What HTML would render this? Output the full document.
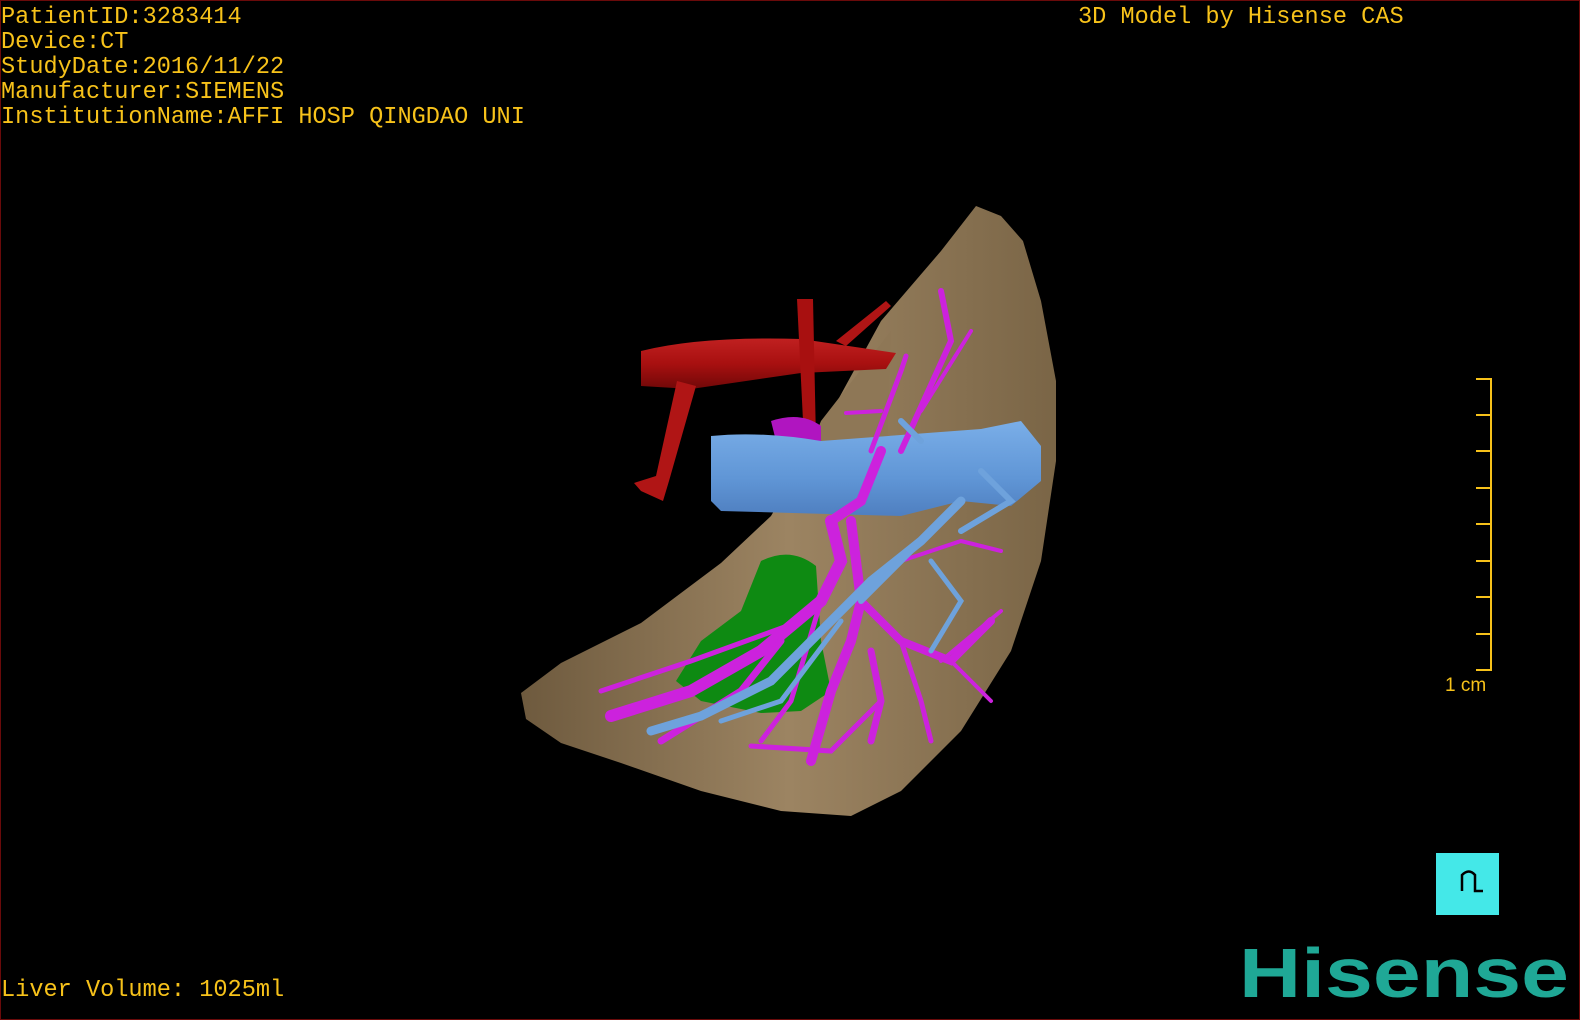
<!DOCTYPE html>
<html><head><meta charset="utf-8"><style>
html,body{margin:0;padding:0;background:#000;}
#f{position:relative;width:1578px;height:1018px;border:1px solid #6a0a0a;overflow:hidden;background:#000;}
.t{position:absolute;color:#f7c21a;font-family:"Liberation Mono",monospace;font-size:23.6px;line-height:25px;white-space:pre;}
</style></head><body><div id="f">
<div class="t" style="left:0;top:4px">PatientID:3283414
Device:CT
StudyDate:2016/11/22
Manufacturer:SIEMENS
InstitutionName:AFFI HOSP QINGDAO UNI</div>
<div class="t" style="left:1077px;top:4px">3D Model by Hisense CAS</div>
<div class="t" style="left:0;top:977px">Liver Volume: 1025ml</div>
<svg width="1578" height="1018" style="position:absolute;left:0;top:0">
<defs>
<linearGradient id="lv" x1="0" y1="0" x2="1" y2="0">
<stop offset="0" stop-color="#6e5a3e"/><stop offset="0.5" stop-color="#9c8462"/><stop offset="1" stop-color="#7a6546"/></linearGradient>
<linearGradient id="rd" x1="0" y1="0" x2="0" y2="1"><stop offset="0" stop-color="#c02020"/><stop offset="0.5" stop-color="#a81010"/><stop offset="1" stop-color="#700808"/></linearGradient>
<linearGradient id="bl" x1="0" y1="0" x2="0" y2="1"><stop offset="0" stop-color="#7aaee8"/><stop offset="0.6" stop-color="#6096d6"/><stop offset="1" stop-color="#4f7fc0"/></linearGradient>
</defs>
<path d="M520,692 L560,662 L640,622 L720,562 L770,515 L820,430 L880,320 L940,250 L975,205 L1000,215 L1022,240 L1040,300 L1055,380 L1055,460 L1040,560 L1010,650 L960,730 L900,790 L850,815 L780,810 L700,790 L620,762 L560,742 L525,718 Z" fill="url(#lv)"/>
<path d="M820,420 L890,330 L885,480 L800,470 Z" fill="#8e7756"/>
<path d="M640,350 Q700,335 800,338 L895,352 L885,368 L800,372 L690,388 L640,385 Z" fill="url(#rd)"/>
<path d="M676,380 L695,385 L668,480 L662,500 L640,490 L633,482 L655,475 Z" fill="#b01515"/>
<path d="M796,298 L812,298 L815,440 L803,440 Z" fill="#a81010"/>
<path d="M835,340 L885,300 L890,305 L845,345 Z" fill="#b01515"/>
<path d="M770,420 Q800,410 820,425 L820,445 L775,440 Z" fill="#b015c0"/>
<path d="M710,435 Q760,430 820,440 L980,428 L1020,420 L1040,445 L1040,480 L1010,505 L960,500 L900,515 L720,510 L710,500 Z" fill="url(#bl)"/>
<path d="M760,560 Q790,545 815,565 L820,640 L830,690 L800,710 L760,712 L700,700 L675,680 L700,640 L740,610 Z" fill="#0e8a12"/>
<g fill="none" stroke="#cc22dd" stroke-linecap="round">
<path d="M830,520 L840,560 L820,600 L760,650 L690,690 L610,715" stroke-width="12"/>
<path d="M850,520 L860,600 L850,640 L830,690 L810,760" stroke-width="10"/>
<path d="M860,600 L900,640 L950,660 L990,620" stroke-width="8"/>
<path d="M870,650 L880,700 L870,740" stroke-width="7"/>
<path d="M780,640 L740,690 L660,740" stroke-width="7"/>
<path d="M800,620 L690,660 L600,690" stroke-width="5"/>
<path d="M820,600 L790,700 L760,740" stroke-width="5"/>
<path d="M900,640 L920,700 L930,740" stroke-width="5"/>
<path d="M940,660 L1000,610" stroke-width="4"/>
<path d="M950,660 L990,700" stroke-width="4"/>
<path d="M880,700 L830,750 L750,745" stroke-width="5"/>
<path d="M870,450 L900,370 L905,355" stroke-width="5"/>
<path d="M900,450 L950,340 L940,290" stroke-width="6"/>
<path d="M920,410 L970,330" stroke-width="4"/>
<path d="M880,410 L845,412" stroke-width="4"/>
<path d="M830,520 L860,500 L880,450" stroke-width="10"/>
<path d="M900,560 L960,540 L1000,550" stroke-width="4"/>
</g>
<g fill="none" stroke="#6ea2dc" stroke-linecap="round">
<path d="M960,500 L920,540 L870,580 L820,630 L770,680 L700,715 L650,730" stroke-width="9"/>
<path d="M950,510 L900,560 L860,600" stroke-width="6"/>
<path d="M930,560 L960,600 L930,650" stroke-width="5"/>
<path d="M980,470 L1010,500 L960,530" stroke-width="6"/>
<path d="M840,620 L780,700 L720,720" stroke-width="5"/>
<path d="M900,420 L920,440" stroke-width="6"/>
</g>
<path d="M1475,378 H1490 V669 H1475 M1475,414 H1490 M1475,450 H1490 M1475,487 H1490 M1475,523 H1490 M1475,560 H1490 M1475,596 H1490 M1475,633 H1490" stroke="#f7c21a" stroke-width="2" fill="none"/>
<text x="1444" y="690" fill="#f7c21a" font-family="Liberation Sans,sans-serif" font-size="19">1 cm</text>
<rect x="1435" y="852" width="63" height="62" fill="#44e8e8"/>
<path d="M1461,890 V874 Q1468,867 1474,874 V890 H1482" stroke="#000" stroke-width="2.5" fill="none"/>
<text x="1238" y="996" fill="#1fa896" font-family="Liberation Sans,sans-serif" font-weight="bold" font-size="70" textLength="330" lengthAdjust="spacingAndGlyphs">Hisense</text>
</svg>
</div></body></html>
